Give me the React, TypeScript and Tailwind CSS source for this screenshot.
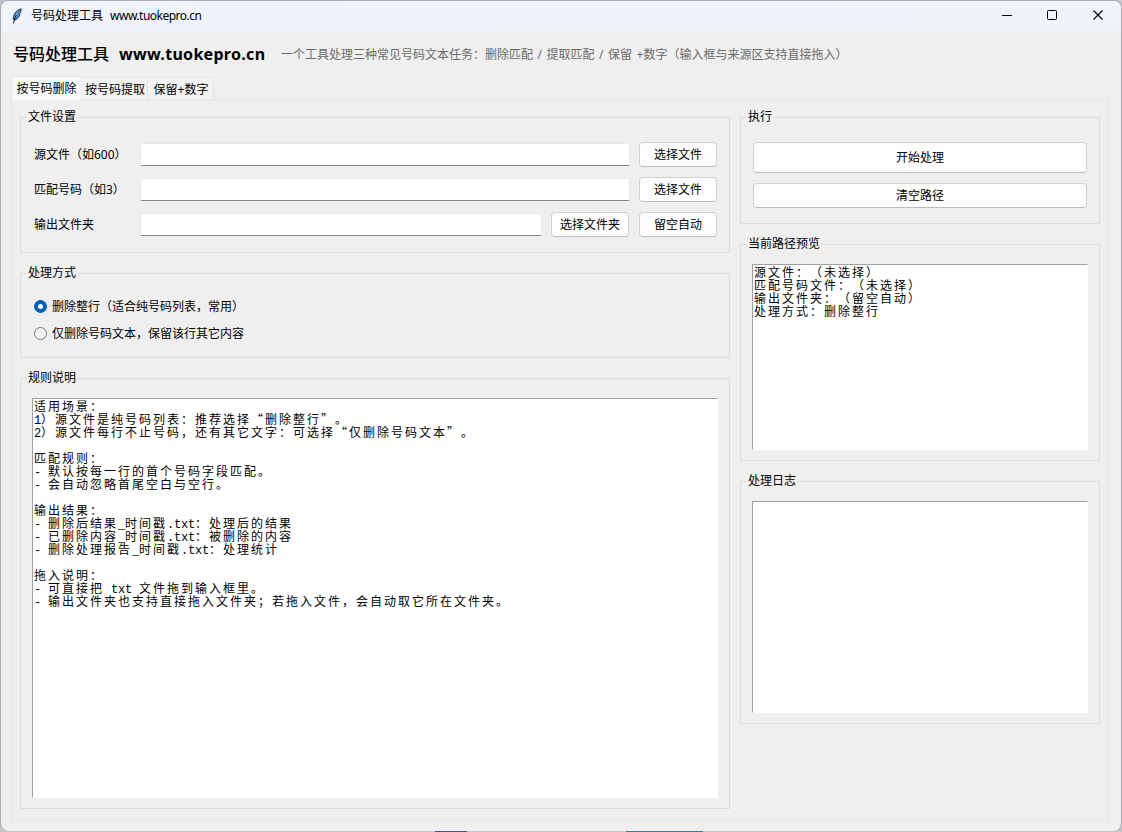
import React, { useState } from 'react';

const RULES_TEXT = `适用场景：
1）源文件是纯号码列表：推荐选择“删除整行”。
2）源文件每行不止号码，还有其它文字：可选择“仅删除号码文本”。

匹配规则：
- 默认按每一行的首个号码字段匹配。
- 会自动忽略首尾空白与空行。

输出结果：
- 删除后结果_时间戳.txt：处理后的结果
- 已删除内容_时间戳.txt：被删除的内容
- 删除处理报告_时间戳.txt：处理统计

拖入说明：
- 可直接把 txt 文件拖到输入框里。
- 输出文件夹也支持直接拖入文件夹；若拖入文件，会自动取它所在文件夹。`;

const PREVIEW_TEXT = `源文件：（未选择）
匹配号码文件：（未选择）
输出文件夹：（留空自动）
处理方式：删除整行`;

const TABS = ['按号码删除', '按号码提取', '保留+数字'];
const MODES = ['删除整行（适合纯号码列表，常用）', '仅删除号码文本，保留该行其它内容'];

interface GroupProps {
  title: string;
  className: string;
  children: React.ReactNode;
}

const Group: React.FC<GroupProps> = ({ title, className, children }) => (
  <section className={`flex flex-col border border-[#dcdcdc] shrink-0 ${className}`}>
    <h2 className="ml-[6px] -mt-[10px] h-[18px] w-fit shrink-0 bg-[#efefef] px-px leading-[18px]">{title}</h2>
    {children}
  </section>
);

const Button: React.FC<{ className: string; children: React.ReactNode }> = ({ className, children }) => (
  <button
    type="button"
    className={`shrink-0 rounded-[4px] border border-[#d0d0d0] border-b-[#bcbcbc] bg-[#fdfdfd] text-center ${className}`}
  >
    {children}
  </button>
);

const Entry: React.FC = () => (
  <input
    type="text"
    className="h-[23px] min-w-0 flex-1 rounded-[2px] border border-[#e8e8e8] border-b-[#868686] bg-white outline-none"
  />
);

// Fixed-width text: wide glyphs take 14px, latin glyphs take 7px
const TextBox: React.FC<{ text: string; className: string }> = ({ text, className }) => (
  <div
    className={`mx-[11px] shrink-0 overflow-hidden border border-t-[#a0a0a0] border-l-[#a0a0a0] border-r-white border-b-white bg-white pl-px ${className}`}
  >
    {text.split('\n').map((line, i) => (
      <div key={i} className="flex h-[13px] items-baseline whitespace-pre leading-[13px] [text-spacing-trim:space-all]">
        {line.split(/([\x20-\x7e]+)/).filter(Boolean).map((run, j) =>
          /^[\x20-\x7e]/.test(run) ? (
            <span key={j} className="font-['Liberation_Mono',monospace] text-[12px] tracking-[-0.2px]">
              {run}
            </span>
          ) : (
            <span key={j} className="font-['Noto_Sans_CJK_SC',sans-serif] text-[12px] tracking-[2px]">
              {run}
            </span>
          ),
        )}
      </div>
    ))}
  </div>
);

const Feather = () => (
  <svg className="h-[16px] w-[12px]" viewBox="0 0 12 16">
    <path d="M10.2 0.8C6.5 1.6 3.4 4.6 2.6 8.2L2.2 11.4L4 12.2C6.8 11 8.6 8.4 9 6L8.2 5.8L9.6 4.4Z" fill="#4d8fd0" stroke="#15202c" strokeWidth="0.8" />
    <path d="M8.4 3C5.8 5.6 3.8 9 2.6 15.4" fill="none" stroke="#0c1520" strokeWidth="1" />
    <path d="M7.9 3L5.2 7" stroke="#b9dcf7" strokeWidth="0.8" />
  </svg>
);

const TitleBar = () => (
  <header className="flex h-[30px] shrink-0 items-center bg-linear-to-r from-[#eef3fc] to-[#eef4f8] pl-[10px]">
    <Feather />
    <span className="ml-[8px]">号码处理工具</span>
    <span className="ml-[7px] tracking-[-0.5px]">www.tuokepro.cn</span>
    <svg className="ml-auto mr-[16px] -mt-[2px] h-[12px] w-[104px]" viewBox="0 0 104 12" fill="none" stroke="#000">
      <path d="M1 6.5H11" />
      <rect x="46.5" y="1.5" width="9" height="9" rx="1" />
      <path d="M92.5 1.5L101.5 10.5M101.5 1.5L92.5 10.5" strokeWidth="1.1" />
    </svg>
  </header>
);

export default function App() {
  const [tab, setTab] = useState(0);
  const [mode, setMode] = useState(0);

  return (
    <div className="flex h-[832px] w-[1122px] flex-col bg-[#c4c4c8] font-['Noto_Sans','Noto_Sans_CJK_SC',sans-serif] text-[12px] text-black">
      <div className="flex h-[831px] flex-col overflow-hidden rounded-[8px] border border-b-0 border-[#ababb0] bg-[#efefef]">
        <TitleBar />

        <div className="flex h-[45px] shrink-0 items-center pl-[12px]">
          <h1 className="flex items-center text-[16px] font-bold">
            <span className="w-[96px] font-medium">号码处理工具</span>
            <span className="ml-[10px] w-[147px] tracking-[0.3px]">www.tuokepro.cn</span>
          </h1>
          <p className="ml-[15px] mt-[2px] whitespace-pre text-[#6b6b6b] [word-spacing:1.4px]">
            一个工具处理三种常见号码文本任务：删除匹配 / 提取匹配 / 保留 +数字（输入框与来源区支持直接拖入）
          </p>
        </div>

        <nav className="ml-[10px] flex h-[23px] shrink-0 items-end">
          {TABS.map((label, i) => (
            <button
              key={label}
              type="button"
              onClick={() => setTab(i)}
              className={`shrink-0 whitespace-nowrap border border-b-0 border-[#e5e5e5] ${
                i === tab
                  ? 'z-10 -mb-px h-[24px] w-[71px] bg-[#f9f9f9] leading-[22px]'
                  : 'h-[22px] w-[66px] border-l-0 bg-[#f3f3f3] pt-[3px] pl-px leading-[18px]'
              }`}
            >
              {label}
            </button>
          ))}
        </nav>

        <main className="ml-[10px] flex h-[721px] w-[1098px] shrink-0 gap-[10px] border border-[#e5e5e5] pl-[8px] pt-[17px]">
          <div className="flex w-[710px] shrink-0 flex-col gap-[20px]">
            <Group title="文件设置" className="h-[136px]">
              <div className="mt-[16px] flex flex-col gap-[10px] pl-[13px] pr-[12px]">
                <div className="flex h-[25px] items-center">
                  <label className="w-[106px] shrink-0 whitespace-nowrap">源文件（如600）</label>
                  <Entry />
                  <Button className="ml-[9px] h-[25px] w-[78px]">选择文件</Button>
                </div>
                <div className="flex h-[25px] items-center">
                  <label className="w-[106px] shrink-0 whitespace-nowrap">匹配号码（如3）</label>
                  <Entry />
                  <Button className="ml-[9px] h-[25px] w-[78px]">选择文件</Button>
                </div>
                <div className="flex h-[25px] items-center">
                  <label className="w-[106px] shrink-0 whitespace-nowrap">输出文件夹</label>
                  <Entry />
                  <Button className="ml-[9px] h-[25px] w-[78px]">选择文件夹</Button>
                  <Button className="ml-[10px] h-[25px] w-[78px]">留空自动</Button>
                </div>
              </div>
            </Group>

            <Group title="处理方式" className="h-[85px]">
              <div className="mt-[15px] flex flex-col gap-[7px] pl-[13px]">
                {MODES.map((label, i) => (
                  <button key={label} type="button" onClick={() => setMode(i)} className="flex h-[20px] items-center gap-[5px]">
                    <span
                      className={`mb-px flex h-[13px] w-[13px] items-center justify-center rounded-full border ${
                        i === mode ? 'border-[#005fb8] bg-[#005fb8]' : 'border-[#767676] bg-[#f3f3f3]'
                      }`}
                    >
                      {i === mode && <span className="h-[5px] w-[5px] rounded-full bg-white" />}
                    </span>
                    {label}
                  </button>
                ))}
              </div>
            </Group>

            <Group title="规则说明" className="h-[431px]">
              <TextBox text={RULES_TEXT} className="mt-[11px] h-[400px]" />
            </Group>
          </div>

          <div className="flex w-[360px] shrink-0 flex-col gap-[20px]">
            <Group title="执行" className="h-[107px]">
              <div className="mt-[16px] flex flex-col gap-[10px] px-[12px]">
                <Button className="h-[31px] w-full">开始处理</Button>
                <Button className="h-[25px] w-full">清空路径</Button>
              </div>
            </Group>

            <Group title="当前路径预览" className="h-[217px]">
              <TextBox text={PREVIEW_TEXT} className="mt-[11px] h-[186px]" />
            </Group>

            <Group title="处理日志" className="h-[243px]">
              <TextBox text="" className="mt-[11px] h-[212px]" />
            </Group>
          </div>
        </main>
      </div>
      <div className="flex h-px pl-[435px]">
        <div className="w-[32px] bg-[#5a4a78]" />
        <div className="ml-[159px] w-[77px] bg-[#3a7a9c]" />
      </div>
    </div>
  );
}
